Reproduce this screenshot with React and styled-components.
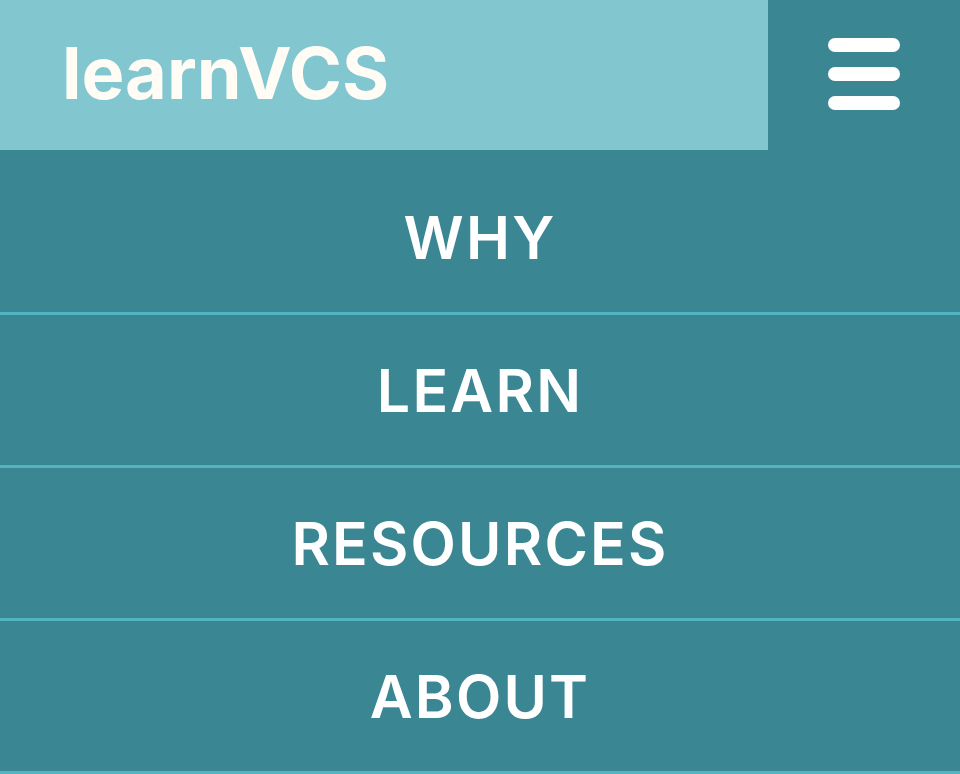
import React from "react";
import styled, { createGlobalStyle } from "styled-components";

const links = ["WHY", "LEARN", "RESOURCES", "ABOUT"];

const App = () => {
  return (
    <>
      <GlobalStyle />
      <Page>
        <Header>
          <Brand>learnVCS</Brand>
          <MenuButton aria-label="menu">
            <Bar />
            <Bar />
            <Bar />
          </MenuButton>
        </Header>
        <NavList>
          {links.map((label) => (
            <NavItem key={label}>
              <NavLink href="#">{label}</NavLink>
            </NavItem>
          ))}
        </NavList>
      </Page>
    </>
  );
};

export default App;

const GlobalStyle = createGlobalStyle`
  html, body {
    margin: 0;
    padding: 0;
    background-color: #3a8692;
  }
  * {
    box-sizing: border-box;
  }
`;

const Page = styled.div`
  width: 960px;
  font-family: "Inter", "Liberation Sans", sans-serif;
  background-color: #3a8692;
`;

const Header = styled.header`
  display: flex;
  height: 150px;
`;

const Brand = styled.div`
  flex: 1;
  display: flex;
  align-items: center;
  padding-left: 62px;
  padding-bottom: 5px;
  background-color: #82c6d0;
  color: #fffbf5;
  font-size: 72px;
  font-weight: 700;
  letter-spacing: 0;
`;

const MenuButton = styled.div`
  width: 192px;
  display: flex;
  flex-direction: column;
  align-items: center;
  justify-content: center;
  gap: 15px;
  padding-bottom: 3px;
  background-color: #3a8692;
  cursor: pointer;
`;

const Bar = styled.span`
  display: block;
  width: 72px;
  height: 14px;
  border-radius: 7px;
  background-color: #ffffff;
`;

const NavList = styled.ul`
  list-style: none;
  margin: 0;
  padding: 12px 0 0;
`;

const NavItem = styled.li`
  height: 153px;
  border-bottom: 3px solid #52b4c0;
  display: flex;
  align-items: center;
  justify-content: center;
`;

const NavLink = styled.a`
  color: #ffffff;
  text-decoration: none;
  font-size: 59px;
  font-weight: 600;
  letter-spacing: 2.2px;
`;
